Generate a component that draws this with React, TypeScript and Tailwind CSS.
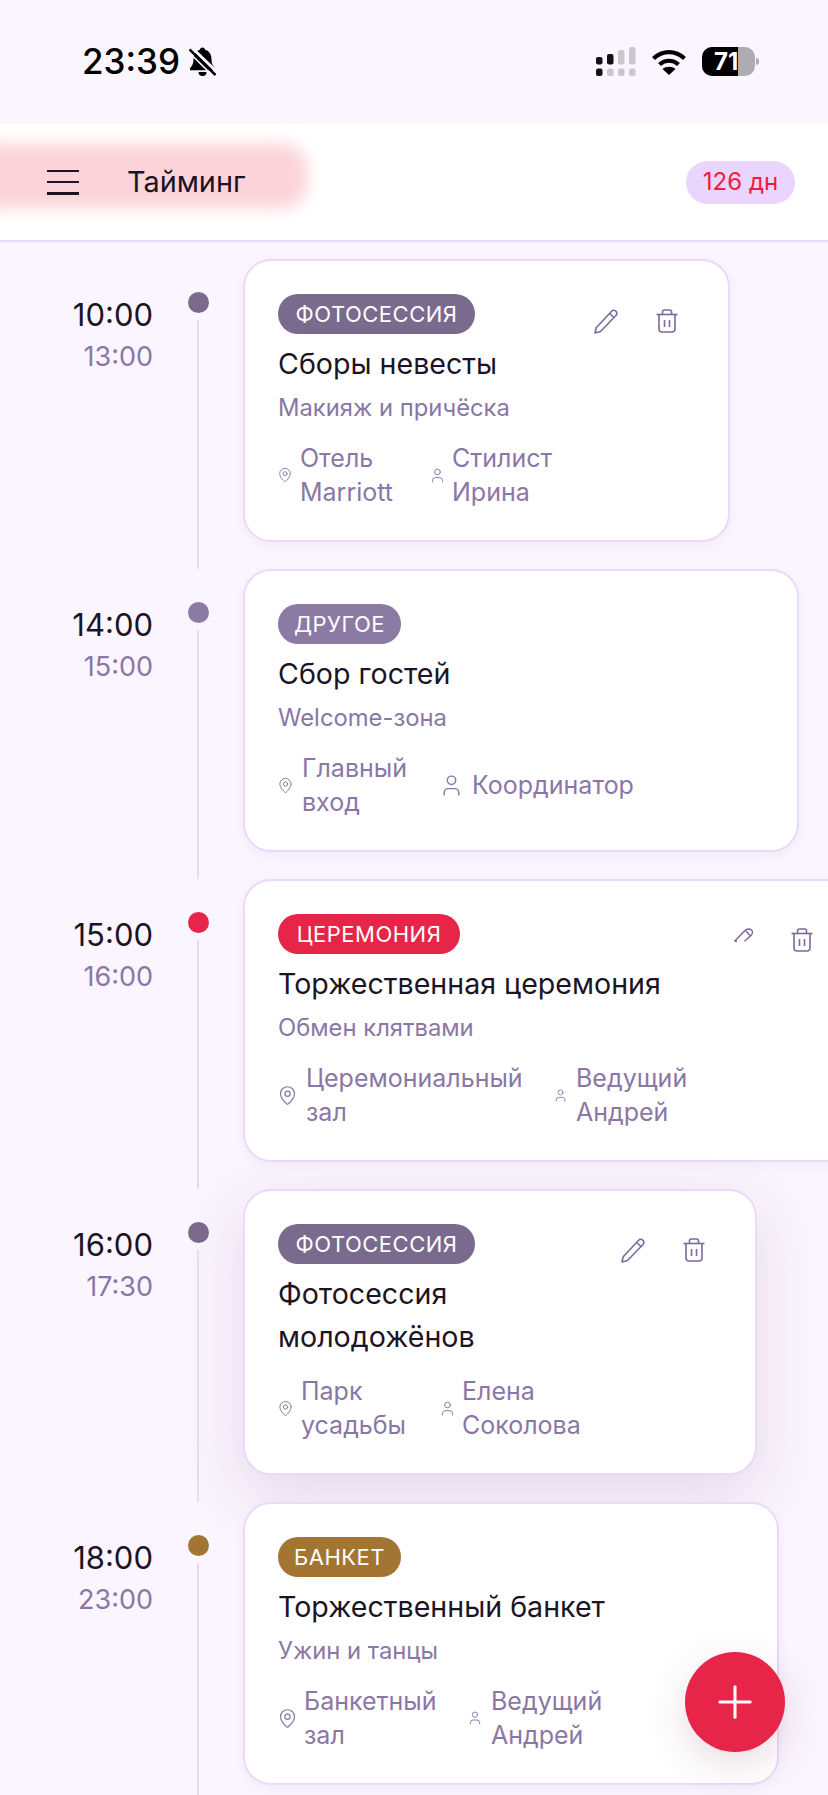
import { MapPin, Plus, User } from 'lucide-react';

type Item = {
  from: string;
  to: string;
  dot: string;
  badge: string;
  badgeClass: string;
  title: string[];
  sub?: string;
  place: string[];
  who: string[];
  cardClass: string;
  actionsClass?: string;
  squashedPencil?: boolean;
  pin: number;
  person: number;
  placeClass: string;
  personClass: string;
};

const items: Item[] = [
  {
    from: '10:00',
    to: '13:00',
    dot: 'bg-[#7a6a8e]',
    badge: 'ФОТОСЕССИЯ',
    badgeClass: 'bg-[#7a6a8e] w-[197px]',
    title: ['Сборы невесты'],
    sub: 'Макияж и причёска',
    place: ['Отель', 'Marriott'],
    who: ['Стилист', 'Ирина'],
    cardClass: 'w-[487px]',
    actionsClass: 'left-[349px] top-[48px] gap-[38px]',
    pin: 16,
    person: 17,
    placeClass: 'w-[151px] gap-[7px]',
    personClass: 'gap-[6px]',
  },
  {
    from: '14:00',
    to: '15:00',
    dot: 'bg-[#8b7aa3]',
    badge: 'ДРУГОЕ',
    badgeClass: 'bg-[#8b7aa3] w-[123px]',
    title: ['Сбор гостей'],
    sub: 'Welcome-зона',
    place: ['Главный', 'вход'],
    who: ['Координатор'],
    cardClass: 'w-[556px]',
    pin: 17,
    person: 25,
    placeClass: 'w-[161px] gap-[8px]',
    personClass: 'gap-[8px]',
  },
  {
    from: '15:00',
    to: '16:00',
    dot: 'bg-[#e62548]',
    badge: 'ЦЕРЕМОНИЯ',
    badgeClass: 'bg-[#e62548] w-[182px]',
    title: ['Торжественная церемония'],
    sub: 'Обмен клятвами',
    place: ['Церемониальный', 'зал'],
    who: ['Ведущий', 'Андрей'],
    cardClass: 'w-[640px] shrink-0',
    actionsClass: 'left-[489px] top-[47px] gap-[37px]',
    squashedPencil: true,
    pin: 21,
    person: 15,
    placeClass: 'w-[275px] gap-[8px]',
    personClass: 'gap-[8px]',
  },
  {
    from: '16:00',
    to: '17:30',
    dot: 'bg-[#7a6a8e]',
    badge: 'ФОТОСЕССИЯ',
    badgeClass: 'bg-[#7a6a8e] w-[197px]',
    title: ['Фотосессия', 'молодожёнов'],
    place: ['Парк', 'усадьбы'],
    who: ['Елена', 'Соколова'],
    cardClass: 'w-[514px] shadow-[0_20px_60px_rgba(122,60,110,0.16)]',
    actionsClass: 'left-[376px] top-[47px] gap-[38px]',
    pin: 17,
    person: 17,
    placeClass: 'w-[161px] gap-[7px]',
    personClass: 'gap-[6px]',
  },
  {
    from: '18:00',
    to: '23:00',
    dot: 'bg-[#a37533]',
    badge: 'БАНКЕТ',
    badgeClass: 'bg-[#a37533] w-[123px]',
    title: ['Торжественный банкет'],
    sub: 'Ужин и танцы',
    place: ['Банкетный', 'зал'],
    who: ['Ведущий', 'Андрей'],
    cardClass: 'w-[536px]',
    pin: 21,
    person: 16,
    placeClass: 'w-[189px] gap-[6px]',
    personClass: 'gap-[8px]',
  },
];

function Lines({ lines }: { lines: string[] }) {
  return (
    <div>
      {lines.map((l) => (
        <div key={l}>{l}</div>
      ))}
    </div>
  );
}

function MutedBell() {
  return (
    <svg width="27" height="30" viewBox="0 0 27 30" className="shrink-0">
      <path
        d="M13.5 0.5c1.5 0 2.5 1 2.5 2.2c4.5 1.2 6.5 5 6.5 9.5c0 4 1 6.5 3.5 9v2H1v-2c2.5-2.5 3.5-5 3.5-9c0-4.5 2-8.3 6.5-9.5C11 1.5 12 0.5 13.5 0.5Z"
        fill="black"
      />
      <path d="M9.5 25h8a4 4 0 0 1-8 0Z" fill="black" />
      <path d="M1 -1L28 25" stroke="#faf5ff" strokeWidth="3" />
      <path d="M0.5 2.5L26.5 28" stroke="black" strokeWidth="2.6" />
      <path d="M-2 3.5L25 30" stroke="#faf5ff" strokeWidth="1.6" />
    </svg>
  );
}

function StatusBar() {
  return (
    <div className="flex h-[124px] items-center justify-between pb-[1px] pl-[82px] pr-[69px]">
      <div className="flex items-center gap-[9px]">
        <span className="text-[35px] leading-none font-medium text-black">23:39</span>
        <MutedBell />
      </div>
      <div className="flex items-center gap-[16px]">
        {/* dual sim bars */}
        <svg width="40" height="30" viewBox="0 0 40 30">
          <rect x="0" y="10" width="6.5" height="7.5" rx="2" fill="#111" />
          <rect x="11" y="7" width="6.5" height="10.5" rx="2" fill="#111" />
          <rect x="22" y="3" width="6.5" height="14.5" rx="2.5" fill="#c9c6cc" />
          <rect x="33" y="0" width="6.5" height="17.5" rx="2.5" fill="#c9c6cc" />
          <rect x="0" y="21.5" width="6.5" height="7.5" rx="2" fill="#111" />
          <rect x="11" y="21.5" width="6.5" height="7.5" rx="2" fill="#c9c6cc" />
          <rect x="22" y="21.5" width="6.5" height="7.5" rx="2" fill="#c9c6cc" />
          <rect x="33" y="21.5" width="6.5" height="7.5" rx="2" fill="#c9c6cc" />
        </svg>
        <svg width="34" height="26" viewBox="0 0 34 26" fill="none" stroke="black" strokeWidth="4.2">
          <path d="M1.5 9.5C10.5 1 23.5 1 32.5 9.5" />
          <path d="M7.5 15.5C13 10.5 21 10.5 26.5 15.5" />
          <path d="M17 26L10.5 20C14 17 20 17 23.5 20Z" fill="black" stroke="none" />
        </svg>
        <div className="flex items-center gap-[1px]">
          <div className="relative flex h-[29px] w-[53px] overflow-hidden rounded-[10px] bg-[#aeabb1]">
            <div className="w-[36px] bg-black" />
            <span className="absolute left-[12px] top-0 text-[24px] leading-[29px] font-bold text-white">71</span>
          </div>
          <div className="h-[7px] w-[3px] rounded-r-full bg-[#aeabb1]" />
        </div>
      </div>
    </div>
  );
}

function Header() {
  return (
    <div className="relative flex h-[118px] items-center justify-between overflow-hidden border-b-2 border-[#ead9fb] bg-white pl-[47px] pr-[33px]">
      {/* blurred red patch over the title */}
      <div className="absolute left-[-30px] top-[20px] h-[64px] w-[337px] rounded-[24px] bg-[#fbd3d8] blur-[8px]" />
      <div className="relative flex items-center gap-[48px]">
        <div className="flex w-[32px] flex-col gap-[9px]">
          <div className="h-[2px] bg-[#1c1424]" />
          <div className="h-[2px] bg-[#1c1424]" />
          <div className="h-[3px] bg-[#1c1424]" />
        </div>
        <span className="text-[28.8px] text-[#1c1424]">Тайминг</span>
      </div>
      <div className="flex h-[43px] w-[109px] items-center justify-center rounded-full bg-[#e9d5fd] text-[24px] text-[#ee1c3f]">
        126 дн
      </div>
    </div>
  );
}

function PencilIcon() {
  return (
    <svg width="24" height="25" viewBox="0 0 24 25" fill="none" stroke="currentColor" strokeWidth="1.6" strokeLinejoin="round">
      <path d="M1 24l1.2-5.2L17.6 2.2a3 3 0 0 1 4.3 0a3 3 0 0 1 .1 4.3L6.5 22.5Z" />
      <path d="M15.5 4.5l4.5 4" />
    </svg>
  );
}

function SquashedPencilIcon() {
  return (
    <svg width="20" height="14" viewBox="0 0 20 14" fill="none" stroke="currentColor" strokeWidth="1.5" strokeLinejoin="round">
      <path d="M0.5 13.3H3M0.5 13.3L11 2.5C13 0.5 16 0.5 17.5 2C19 3.5 18.5 6 17 7.5L10.5 13.3" />
      <path d="M12 3L16.5 8" />
    </svg>
  );
}

function TrashIcon() {
  return (
    <svg width="22" height="24" viewBox="0 0 22 24" fill="none" stroke="currentColor" strokeWidth="1.6">
      <path d="M0.5 5.5H21.5" />
      <path d="M6.5 5.5V3a2 2 0 0 1 2-2h5a2 2 0 0 1 2 2v2.5" />
      <path d="M3 5.5V20a3 3 0 0 0 3 3h10a3 3 0 0 0 3-3V5.5" />
      <path d="M8.5 11v7M13.5 11v7" />
    </svg>
  );
}

function Row({ item }: { item: Item }) {
  return (
    <div className="flex">
      <div className="w-[153px] shrink-0 pt-[36px] text-right">
        <div className="text-[31px] leading-[40px] text-[#1c1424]">{item.from}</div>
        <div className="mt-[2px] text-[27px] leading-[40px] text-[#8a77a5]">{item.to}</div>
      </div>
      <div className="flex w-[90px] shrink-0 flex-col items-center pt-[33px]">
        <div className={`h-[21px] w-[21px] rounded-full ${item.dot}`} />
        <div className="mt-[7px] w-[2px] flex-1 bg-[#ead9fb]" />
      </div>
      <div className="shrink-0 pb-[27px]">
        <div className={`relative rounded-[28px] border-2 border-[#ead9fb] bg-white pb-[31px] pl-[33px] pt-[33px] shadow-[0_4px_12px_rgba(122,90,180,0.06)] ${item.cardClass}`}>
          <div className={`flex h-[40px] items-center justify-center rounded-full text-[22px] tracking-[0.5px] text-white ${item.badgeClass}`}>
            {item.badge}
          </div>
          <div className="mt-[8px] text-[28.6px] leading-[43px] text-[#1c1424]">
            <Lines lines={item.title} />
          </div>
          {item.sub && <div className="mt-[3px] text-[23.8px] leading-[40px] text-[#8a77a5]">{item.sub}</div>}
          <div className={`flex items-center text-[25px] leading-[34px] text-[#8a77a5] ${item.sub ? 'mt-[13px]' : 'mt-[16px]'}`}>
            <div className={`flex shrink-0 items-center ${item.placeClass}`}>
              <MapPin size={item.pin} strokeWidth={1.4} className="-ml-[1px] shrink-0" />
              <Lines lines={item.place} />
            </div>
            <div className={`flex items-center ${item.personClass}`}>
              <User size={item.person} strokeWidth={1.4} className="shrink-0" />
              <Lines lines={item.who} />
            </div>
          </div>
          {item.actionsClass && (
            <div className={`absolute flex items-start text-[#7b6a9b] ${item.actionsClass}`}>
              {item.squashedPencil ? <SquashedPencilIcon /> : <PencilIcon />}
              <TrashIcon />
            </div>
          )}
        </div>
      </div>
    </div>
  );
}

export default function App() {
  return (
    <div className="relative h-[1795px] w-[828px] overflow-hidden bg-[#faf5ff] font-['Inter',sans-serif]">
      <StatusBar />
      <Header />
      <div className="pt-[17px]">
        {items.map((item) => (
          <Row key={item.from} item={item} />
        ))}
      </div>
      <button className="absolute left-[685px] top-[1652px] flex h-[100px] w-[100px] items-center justify-center rounded-full bg-[#e62548] text-white shadow-[0_12px_40px_rgba(120,60,80,0.18)]">
        <Plus size={52} strokeWidth={1.4} />
      </button>
    </div>
  );
}
